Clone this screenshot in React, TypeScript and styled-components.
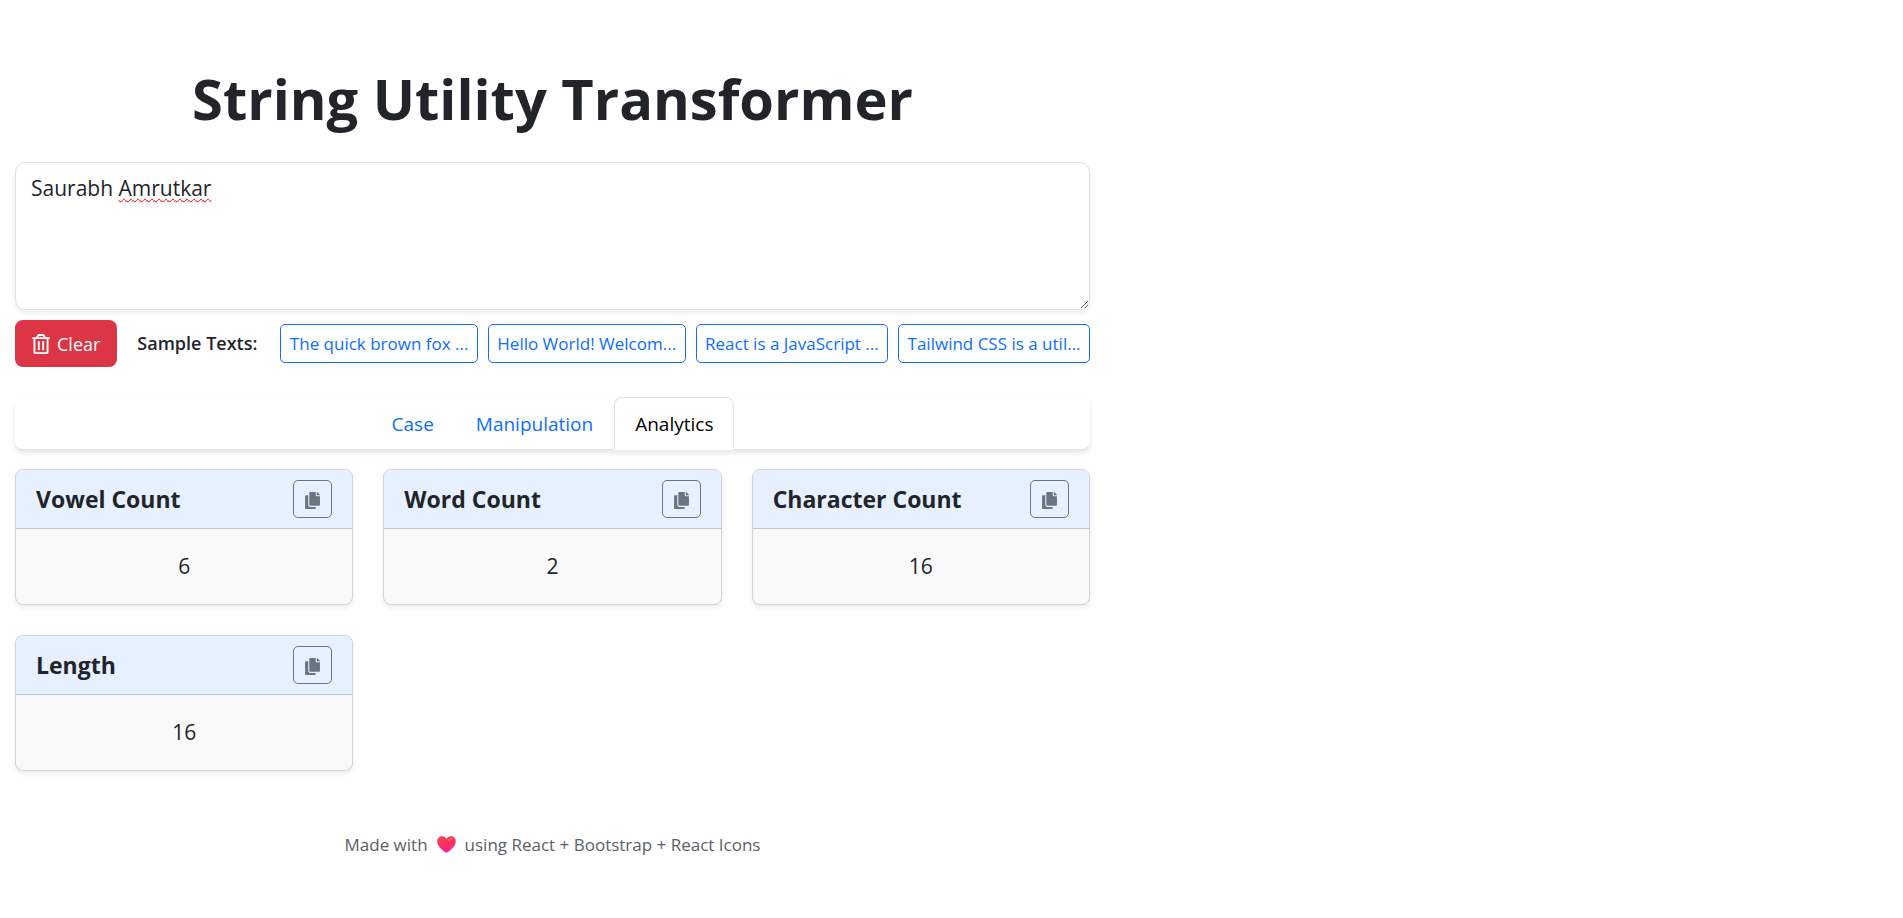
import React, { useState } from "react";
import styled, { createGlobalStyle } from "styled-components";
import { FaCopy, FaRegTrashAlt } from "react-icons/fa";

const GlobalStyle = createGlobalStyle`
  *, *::before, *::after { box-sizing: border-box; }
  body {
    margin: 0;
    background: #fff;
    color: #212529;
    font-family: "Open Sans", "Segoe UI", sans-serif;
    font-size: 21px;
    line-height: 31px;
  }
  button, textarea { font-family: inherit; color: inherit; }
`;

const Container = styled.main`
  max-width: 1105px;
  padding: 62px 15px 48px;
`;

const Title = styled.h1`
  margin: 0 0 28px;
  font-size: 56px;
  font-weight: 700;
  line-height: 72px;
  text-align: center;
`;

const Editor = styled.div`
  position: relative;
  display: flex;
`;

const TextInput = styled.textarea`
  flex: 1;
  height: 148px;
  padding: 10px 15px;
  border: 1px solid #dee2e6;
  border-radius: 10px;
  background: #fff;
  box-shadow: 0 3px 5px rgba(0, 0, 0, 0.075);
  font-size: 21px;
  line-height: 31px;
  resize: vertical;
`;

const SpellingLayer = styled.div`
  position: absolute;
  inset: 0;
  padding: 11px 16px;
  overflow: hidden;
  color: transparent;
  white-space: pre-wrap;
  pointer-events: none;
`;

const Misspelled = styled.span`
  text-decoration: underline wavy #f00 1px;
  text-decoration-skip-ink: none;
  text-underline-offset: 2px;
`;

const Toolbar = styled.div`
  display: flex;
  align-items: center;
  gap: 20px;
  margin-top: 10px;
`;

const ClearButton = styled.button`
  display: flex;
  align-items: center;
  gap: 7px;
  height: 47px;
  padding: 0 17px;
  border: 0;
  border-radius: 8px;
  background: #dc3545;
  color: #fff;
  font-size: 18px;

  svg { width: 18px; height: 20px; }
`;

const SampleLabel = styled.span`
  font-size: 18px;
  font-weight: 600;
  white-space: nowrap;
`;

const Samples = styled.div`
  display: flex;
  flex: 1;
  gap: 10px;
  padding-left: 3px;
`;

const SampleButton = styled.button`
  flex: 1 1 auto;
  height: 39px;
  padding: 0 8px;
  border: 1px solid #0d6efd;
  border-radius: 5px;
  background: transparent;
  color: #0d6efd;
  font-size: 17px;
  white-space: nowrap;
`;

const Tabs = styled.div`
  display: flex;
  justify-content: center;
  height: 53px;
  margin: 30px 0 19px;
  border-bottom: 1px solid #dee2e6;
  border-radius: 8px;
  background: #fff;
  box-shadow: 0 3px 5px rgba(0, 0, 0, 0.1);
`;

const Tab = styled.button<{ $active: boolean }>`
  margin-bottom: -1px;
  padding: 0 20px;
  border: 1px solid;
  border-color: ${(p) => (p.$active ? "#dee2e6 #dee2e6 #fff" : "transparent")};
  border-radius: 8px 8px 0 0;
  background: ${(p) => (p.$active ? "#fff" : "transparent")};
  color: ${(p) => (p.$active ? "#000" : "#0d6efd")};
  font-size: 19px;
`;

const CardGrid = styled.section`
  display: grid;
  grid-template-columns: repeat(3, 1fr);
  gap: 30px;
`;

const Card = styled.article`
  overflow: hidden;
  border: 1px solid #d2d3d4;
  border-radius: 8px;
  background: #f9f9f9;
  box-shadow: 0 3px 5px rgba(0, 0, 0, 0.075);
`;

const CardHeader = styled.header`
  display: flex;
  align-items: center;
  justify-content: space-between;
  height: 59px;
  padding: 0 20px;
  border-bottom: 1px solid #bec6d2;
  background: #e6f0ff;
`;

const CardTitle = styled.h2`
  margin: 0;
  font-size: 23px;
  font-weight: 700;
`;

const CopyButton = styled.button`
  display: grid;
  place-items: center;
  width: 39px;
  height: 38px;
  padding: 2px 0 0;
  border: 1px solid #6c757d;
  border-radius: 5px;
  background: transparent;
  color: #6c757d;

  svg { width: 15px; height: 17px; }
`;

const CardValue = styled.p`
  margin: 0;
  padding: 22px 20px;
  text-align: center;
`;

const Footer = styled.footer`
  display: flex;
  align-items: center;
  justify-content: center;
  gap: 9px;
  margin-top: 58px;
  color: #5c6166;
  font-size: 17px;

  svg { width: 19px; height: 17px; }
`;

function Heart() {
  return (
    <svg viewBox="0 0 19 17" role="img" aria-label="love">
      <defs>
        <linearGradient id="heart" x1="0.3" y1="0" x2="0.6" y2="1">
          <stop offset="0" stopColor="#f5415a" />
          <stop offset="0.5" stopColor="#f92f60" />
          <stop offset="1" stopColor="#f524a4" />
        </linearGradient>
      </defs>
      <path
        fill="url(#heart)"
        d="M5 .3C7 .3 8.500 1.300 9.500 2.700 10.500 1.300 12 .3 14 .3c2.800 0 4.800 2.200 4.800 5 0 4.700-4.700 8.600-7.700 10.800-1 .8-2.200.8-3.200 0C4.900 13.900.2 10 .2 5.300.2 2.500 2.200.3 5 .3Z"
      />
      <path fill="#ff7a6b" fillOpacity="0.6" d="M11 5c.5-2 2-3 3.500-3 1 0 1.500.6 1 1.300C14.500 5 13 5.500 11 5Z" />
    </svg>
  );
}

const samples = [
  "The quick brown fox ...",
  "Hello World! Welcom...",
  "React is a JavaScript ...",
  "Tailwind CSS is a util...",
];
const tabs = ["Case", "Manipulation", "Analytics"];
const initialText = "Saurabh Amrutkar";

export default function App() {
  const [text, setText] = useState(initialText);
  const [active, setActive] = useState("Analytics");

  const stats = [
    { title: "Vowel Count", value: (text.match(/[aeiou]/gi) ?? []).length },
    { title: "Word Count", value: text.split(/\s+/).filter(Boolean).length },
    { title: "Character Count", value: text.length },
    { title: "Length", value: text.length },
  ];

  return (
    <>
      <GlobalStyle />
      <Container>
        <Title>String Utility Transformer</Title>
        <Editor>
          <TextInput
            aria-label="Text to transform"
            spellCheck={false}
            value={text}
            onChange={(e) => setText(e.target.value)}
          />
          {text === initialText && (
            <SpellingLayer aria-hidden="true">
              Saurabh <Misspelled>Amrutkar</Misspelled>
            </SpellingLayer>
          )}
        </Editor>
        <Toolbar>
          <ClearButton type="button" onClick={() => setText("")}>
            <FaRegTrashAlt />
            Clear
          </ClearButton>
          <SampleLabel>Sample Texts:</SampleLabel>
          <Samples>
            {samples.map((sample) => (
              <SampleButton key={sample} type="button" onClick={() => setText(sample)}>
                {sample}
              </SampleButton>
            ))}
          </Samples>
        </Toolbar>
        <Tabs role="tablist">
          {tabs.map((tab) => (
            <Tab
              key={tab}
              type="button"
              role="tab"
              aria-selected={tab === active}
              $active={tab === active}
              onClick={() => setActive(tab)}
            >
              {tab}
            </Tab>
          ))}
        </Tabs>
        <CardGrid>
          {stats.map(({ title, value }) => (
            <Card key={title}>
              <CardHeader>
                <CardTitle>{title}</CardTitle>
                <CopyButton
                  type="button"
                  aria-label={`Copy ${title}`}
                  onClick={() => navigator.clipboard.writeText(String(value))}
                >
                  <FaCopy />
                </CopyButton>
              </CardHeader>
              <CardValue>{value}</CardValue>
            </Card>
          ))}
        </CardGrid>
        <Footer>
          <span>Made with</span>
          <Heart />
          <span>using React + Bootstrap + React Icons</span>
        </Footer>
      </Container>
    </>
  );
}
